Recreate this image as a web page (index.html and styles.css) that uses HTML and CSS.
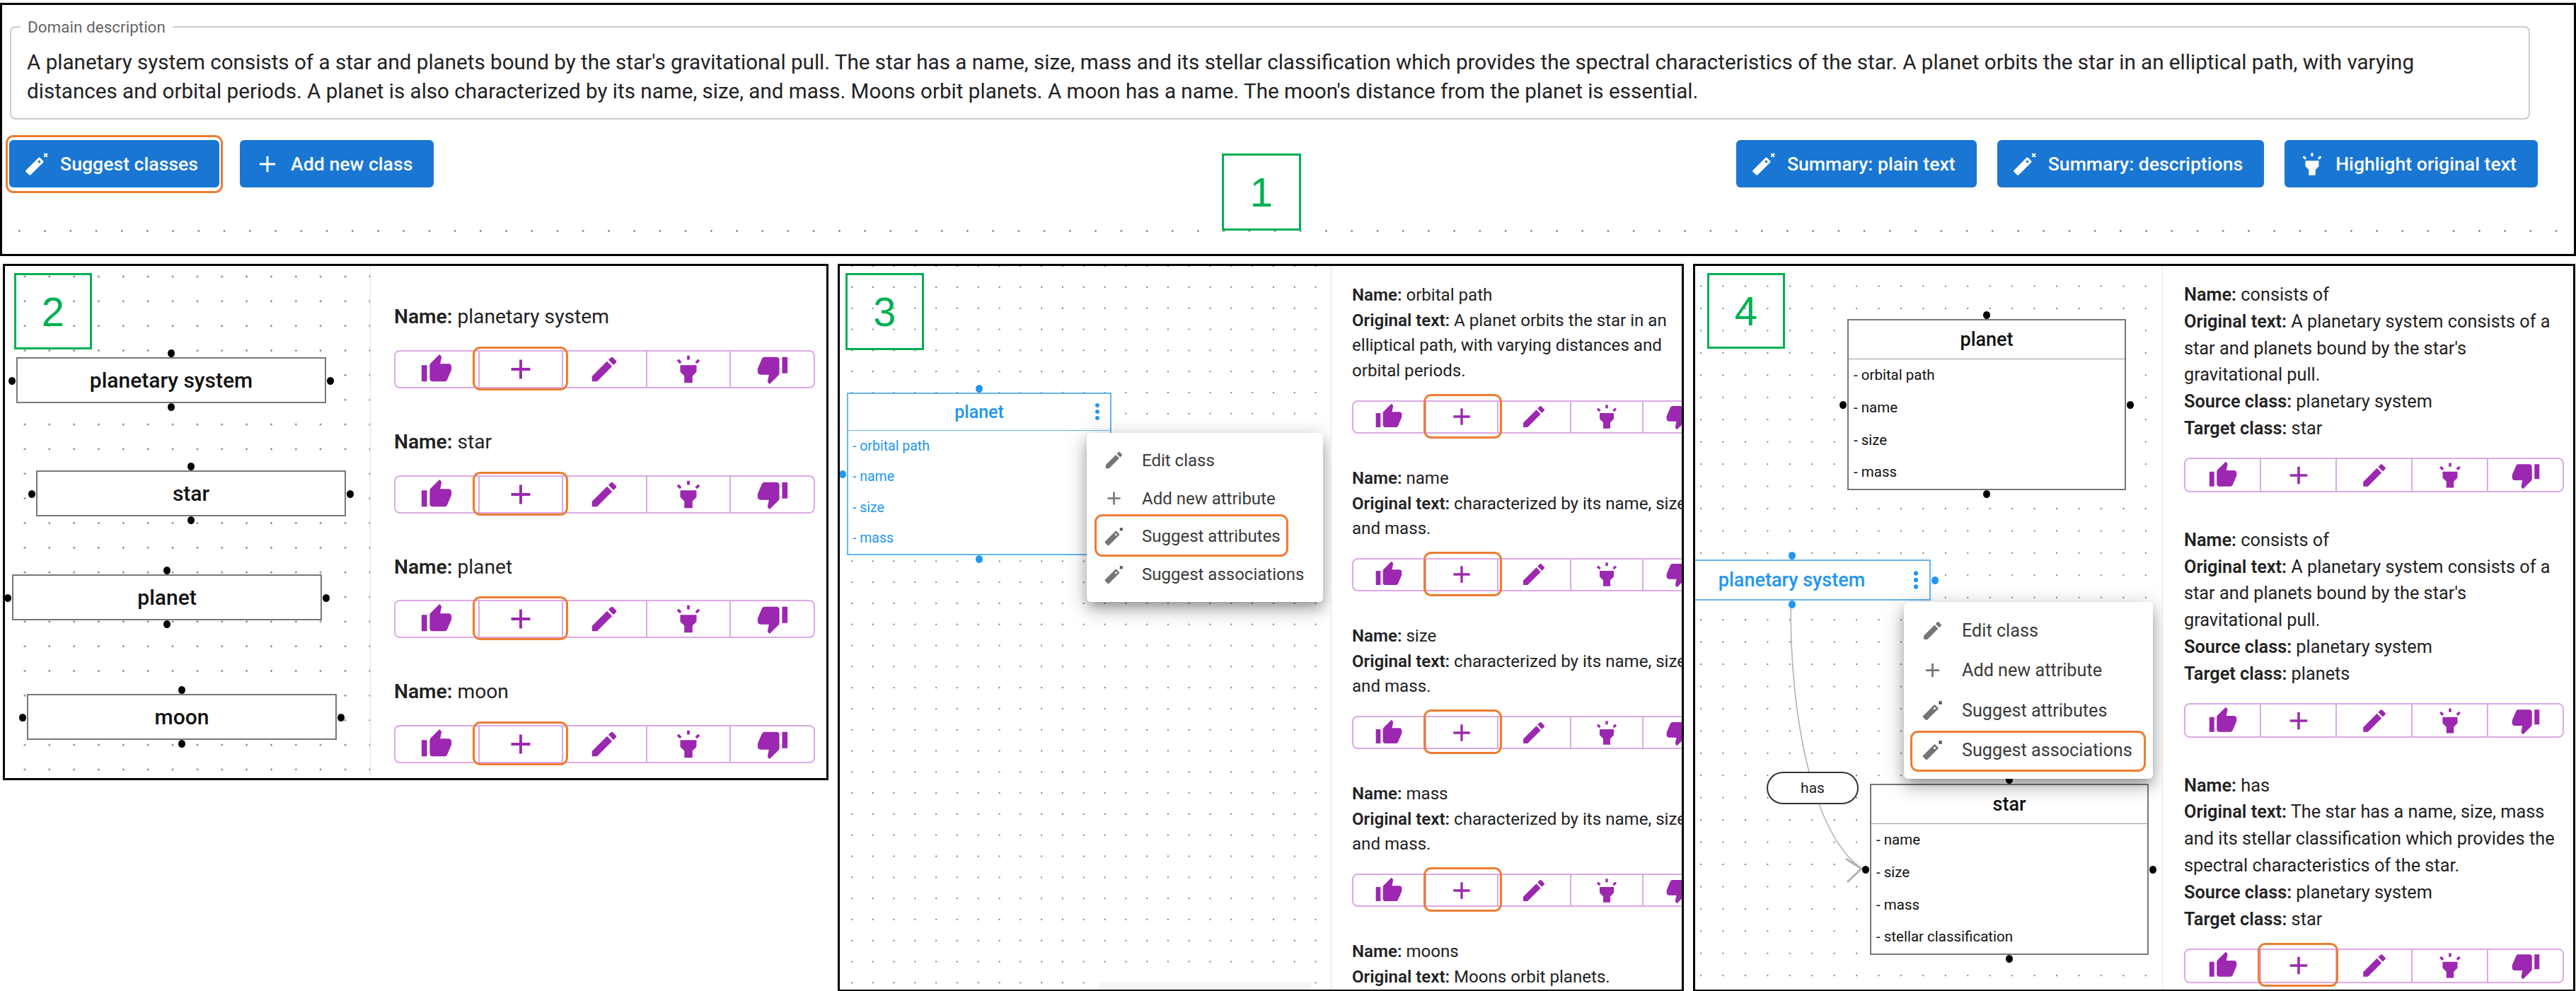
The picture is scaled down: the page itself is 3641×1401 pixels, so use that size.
FILE: index.html
```html
<!DOCTYPE html>
<html lang="en">
<head>
  <meta charset="utf-8">
  <title>Domain model assistant</title>
  <link rel="stylesheet" href="styles.css">
</head>
<body>
  <svg class="defs" xmlns="http://www.w3.org/2000/svg">
    <symbol id="i-wand" viewBox="0 0 24 24">
      <path fill-rule="evenodd" d="M17.71 9.12l-2.83-2.83C14.68 6.1 14.43 6 14.17 6c-.26 0-.51.1-.71.29L2.29 17.46c-.39.39-.39 1.02 0 1.41l2.83 2.83c.2.2.45.3.71.3s.51-.1.71-.29L17.71 10.54c.39-.39.39-1.03 0-1.42zm-3.54 2.12-1.41-1.41 1.41-1.41 1.41 1.41-1.41 1.41z"/>
      <path d="M18.5 2.5l3 3M21.5 2.5l-3 3" fill="none" stroke="currentColor" stroke-width="1.2"/>
    </symbol>
    <symbol id="i-add" viewBox="0 0 24 24"><path d="M19 13h-6v6h-2v-6H5v-2h6V5h2v6h6v2z"/></symbol>
    <symbol id="i-edit" viewBox="0 0 24 24"><path d="M3 17.25V21h3.75L17.81 9.94l-3.75-3.75L3 17.25zM20.71 7.04c.39-.39.39-1.02 0-1.41l-2.34-2.34c-.39-.39-1.02-.39-1.41 0l-1.83 1.83 3.75 3.75 1.83-1.83z"/></symbol>
    <symbol id="i-light" viewBox="0 0 24 24"><path d="M6 14l3 3v5h6v-5l3-3V9H6v5zm5-12h2v3h-2V2zM3.5 5.88l1.41-1.41 2.12 2.12L5.62 8 3.5 5.88zm13.46.71 2.12-2.12 1.41 1.41L18.38 8l-1.42-1.41z"/></symbol>
    <symbol id="i-up" viewBox="0 0 24 24"><path d="M1 21h4V9H1v12zm22-11c0-1.1-.9-2-2-2h-6.31l.95-4.57.03-.32c0-.41-.17-.79-.44-1.06L14.17 1 7.59 7.59C7.22 7.95 7 8.45 7 9v10c0 1.1.9 2 2 2h9c.83 0 1.54-.5 1.84-1.22l3.02-7.05c.09-.23.14-.47.14-.73v-2z"/></symbol>
    <symbol id="i-down" viewBox="0 0 24 24"><path d="M15 3H6c-.83 0-1.54.5-1.84 1.22l-3.02 7.05c-.09.23-.14.47-.14.73v2c0 1.1.9 2 2 2h6.31l-.95 4.57-.03.32c0 .41.17.79.44 1.06L9.83 23l6.59-6.59c.36-.36.58-.86.58-1.41V5c0-1.1-.9-2-2-2zm4 0v12h4V3h-4z"/></symbol>
    <symbol id="i-more" viewBox="0 0 24 24"><path d="M12 8c1.1 0 2-.9 2-2s-.9-2-2-2-2 .9-2 2 .9 2 2 2zm0 2c-1.1 0-2 .9-2 2s.9 2 2 2 2-.9 2-2-.9-2-2-2zm0 6c-1.1 0-2 .9-2 2s.9 2 2 2 2-.9 2-2-.9-2-2-2z"/></symbol>
  </svg>

  <div class="page">
    <!-- 1: description and main actions -->
    <section class="panel panel-top">
      <fieldset class="domain">
        <legend>Domain description</legend>
        <p>A planetary system consists of a star and planets bound by the star's gravitational pull. The star has a name, size, mass and its stellar classification which provides the spectral characteristics of the star. A planet orbits the star in an elliptical path, with varying<br>distances and orbital periods. A planet is also characterized by its name, size, and mass. Moons orbit planets. A moon has a name. The moon's distance from the planet is essential.</p>
      </fieldset>
      <div class="actions">
        <div class="action-group">
          <button class="btn"><svg><use href="#i-wand"/></svg>Suggest classes<span class="ring ring-btn"></span></button>
          <button class="btn"><svg><use href="#i-add"/></svg>Add new class</button>
        </div>
        <div class="action-group">
          <button class="btn"><svg><use href="#i-wand"/></svg>Summary: plain text</button>
          <button class="btn"><svg><use href="#i-wand"/></svg>Summary: descriptions</button>
          <button class="btn"><svg><use href="#i-light"/></svg>Highlight original text</button>
        </div>
      </div>
      <div class="dot-strip"></div>
      <div class="tag tag-1">1</div>
    </section>

    <div class="panel-row">
      <!-- 2: suggested classes -->
      <section class="panel panel-two">
        <div class="canvas">
          <div class="tag tag-2">2</div>
          <div class="node node-plain n2-system">planetary system<i class="h h-t"></i><i class="h h-b"></i><i class="h h-l"></i><i class="h h-r"></i></div>
          <div class="node node-plain n2-star">star<i class="h h-t"></i><i class="h h-b"></i><i class="h h-l"></i><i class="h h-r"></i></div>
          <div class="node node-plain n2-planet">planet<i class="h h-t"></i><i class="h h-b"></i><i class="h h-l"></i><i class="h h-r"></i></div>
          <div class="node node-plain n2-moon">moon<i class="h h-t"></i><i class="h h-b"></i><i class="h h-l"></i><i class="h h-r"></i></div>
        </div>
        <div class="list">
          <div class="item">
            <div class="desc"><b>Name:</b> planetary system</div>
            <div class="votes">
              <span class="vote"><svg><use href="#i-up"/></svg></span>
              <span class="vote"><svg><use href="#i-add"/></svg><span class="ring"></span></span>
              <span class="vote"><svg><use href="#i-edit"/></svg></span>
              <span class="vote"><svg><use href="#i-light"/></svg></span>
              <span class="vote"><svg><use href="#i-down"/></svg></span>
            </div>
          </div>
          <div class="item">
            <div class="desc"><b>Name:</b> star</div>
            <div class="votes">
              <span class="vote"><svg><use href="#i-up"/></svg></span>
              <span class="vote"><svg><use href="#i-add"/></svg><span class="ring"></span></span>
              <span class="vote"><svg><use href="#i-edit"/></svg></span>
              <span class="vote"><svg><use href="#i-light"/></svg></span>
              <span class="vote"><svg><use href="#i-down"/></svg></span>
            </div>
          </div>
          <div class="item">
            <div class="desc"><b>Name:</b> planet</div>
            <div class="votes">
              <span class="vote"><svg><use href="#i-up"/></svg></span>
              <span class="vote"><svg><use href="#i-add"/></svg><span class="ring"></span></span>
              <span class="vote"><svg><use href="#i-edit"/></svg></span>
              <span class="vote"><svg><use href="#i-light"/></svg></span>
              <span class="vote"><svg><use href="#i-down"/></svg></span>
            </div>
          </div>
          <div class="item">
            <div class="desc"><b>Name:</b> moon</div>
            <div class="votes">
              <span class="vote"><svg><use href="#i-up"/></svg></span>
              <span class="vote"><svg><use href="#i-add"/></svg><span class="ring"></span></span>
              <span class="vote"><svg><use href="#i-edit"/></svg></span>
              <span class="vote"><svg><use href="#i-light"/></svg></span>
              <span class="vote"><svg><use href="#i-down"/></svg></span>
            </div>
          </div>
        </div>
      </section>

      <!-- 3: suggested attributes -->
      <section class="panel panel-three">
        <div class="canvas">
          <div class="tag tag-3">3</div>
          <div class="node node-uml node-active n3-planet">
            <div class="node-head">planet<svg class="kebab"><use href="#i-more"/></svg></div>
            <ul class="attrs">
              <li>- orbital path</li>
              <li>- name</li>
              <li>- size</li>
              <li>- mass</li>
            </ul>
            <i class="h h-t"></i><i class="h h-b"></i><i class="h h-l"></i>
          </div>
          <div class="menu n3-menu">
            <div class="menu-item"><svg><use href="#i-edit"/></svg>Edit class</div>
            <div class="menu-item"><svg><use href="#i-add"/></svg>Add new attribute</div>
            <div class="menu-item"><svg><use href="#i-wand"/></svg>Suggest attributes</div>
            <div class="menu-item"><svg><use href="#i-wand"/></svg>Suggest associations</div>
            <span class="ring n3-ring"></span>
          </div>
          <div class="scroll-stub"></div>
        </div>
        <div class="list">
          <div class="item">
            <div class="desc"><b>Name:</b> orbital path<br><b>Original text:</b> A planet orbits the star in an<br>elliptical path, with varying distances and<br>orbital periods.</div>
            <div class="votes">
              <span class="vote"><svg><use href="#i-up"/></svg></span>
              <span class="vote"><svg><use href="#i-add"/></svg><span class="ring"></span></span>
              <span class="vote"><svg><use href="#i-edit"/></svg></span>
              <span class="vote"><svg><use href="#i-light"/></svg></span>
              <span class="vote"><svg><use href="#i-down"/></svg></span>
            </div>
          </div>
          <div class="item">
            <div class="desc"><b>Name:</b> name<br><b>Original text:</b> characterized by its name, size,<br>and mass.</div>
            <div class="votes">
              <span class="vote"><svg><use href="#i-up"/></svg></span>
              <span class="vote"><svg><use href="#i-add"/></svg><span class="ring"></span></span>
              <span class="vote"><svg><use href="#i-edit"/></svg></span>
              <span class="vote"><svg><use href="#i-light"/></svg></span>
              <span class="vote"><svg><use href="#i-down"/></svg></span>
            </div>
          </div>
          <div class="item">
            <div class="desc"><b>Name:</b> size<br><b>Original text:</b> characterized by its name, size,<br>and mass.</div>
            <div class="votes">
              <span class="vote"><svg><use href="#i-up"/></svg></span>
              <span class="vote"><svg><use href="#i-add"/></svg><span class="ring"></span></span>
              <span class="vote"><svg><use href="#i-edit"/></svg></span>
              <span class="vote"><svg><use href="#i-light"/></svg></span>
              <span class="vote"><svg><use href="#i-down"/></svg></span>
            </div>
          </div>
          <div class="item">
            <div class="desc"><b>Name:</b> mass<br><b>Original text:</b> characterized by its name, size,<br>and mass.</div>
            <div class="votes">
              <span class="vote"><svg><use href="#i-up"/></svg></span>
              <span class="vote"><svg><use href="#i-add"/></svg><span class="ring"></span></span>
              <span class="vote"><svg><use href="#i-edit"/></svg></span>
              <span class="vote"><svg><use href="#i-light"/></svg></span>
              <span class="vote"><svg><use href="#i-down"/></svg></span>
            </div>
          </div>
          <div class="item">
            <div class="desc"><b>Name:</b> moons<br><b>Original text:</b> Moons orbit planets.</div>
          </div>
        </div>
      </section>

      <!-- 4: suggested associations -->
      <section class="panel panel-four">
        <div class="canvas">
          <svg class="edges" xmlns="http://www.w3.org/2000/svg">
            <path d="M135 479C135 640 165 800 235 852"/>
            <path class="edge-arrow" d="M213 838L235 852L215 871"/>
          </svg>
          <div class="tag tag-4">4</div>
          <div class="node node-uml n4-planet">
            <div class="node-head">planet</div>
            <ul class="attrs">
              <li>- orbital path</li>
              <li>- name</li>
              <li>- size</li>
              <li>- mass</li>
            </ul>
            <i class="h h-t"></i><i class="h h-b"></i><i class="h h-l"></i><i class="h h-r"></i>
          </div>
          <div class="node node-uml n4-star">
            <div class="node-head">star</div>
            <ul class="attrs">
              <li>- name</li>
              <li>- size</li>
              <li>- mass</li>
              <li>- stellar classification</li>
            </ul>
            <i class="h h-t"></i><i class="h h-b"></i><i class="h h-l"></i><i class="h h-r"></i>
          </div>
          <div class="node node-active n4-system">
            <div class="node-head">planetary system<svg class="kebab"><use href="#i-more"/></svg></div>
            <i class="h h-t"></i><i class="h h-b"></i><i class="h h-r"></i>
          </div>
          <div class="edge-label">has</div>
          <div class="menu n4-menu">
            <div class="menu-item"><svg><use href="#i-edit"/></svg>Edit class</div>
            <div class="menu-item"><svg><use href="#i-add"/></svg>Add new attribute</div>
            <div class="menu-item"><svg><use href="#i-wand"/></svg>Suggest attributes</div>
            <div class="menu-item"><svg><use href="#i-wand"/></svg>Suggest associations</div>
            <span class="ring n4-ring"></span>
          </div>
        </div>
        <div class="list">
          <div class="item">
            <div class="desc"><b>Name:</b> consists of<br><b>Original text:</b> A planetary system consists of a<br>star and planets bound by the star's<br>gravitational pull.<br><b>Source class:</b> planetary system<br><b>Target class:</b> star</div>
            <div class="votes">
              <span class="vote"><svg><use href="#i-up"/></svg></span>
              <span class="vote"><svg><use href="#i-add"/></svg></span>
              <span class="vote"><svg><use href="#i-edit"/></svg></span>
              <span class="vote"><svg><use href="#i-light"/></svg></span>
              <span class="vote"><svg><use href="#i-down"/></svg></span>
            </div>
          </div>
          <div class="item">
            <div class="desc"><b>Name:</b> consists of<br><b>Original text:</b> A planetary system consists of a<br>star and planets bound by the star's<br>gravitational pull.<br><b>Source class:</b> planetary system<br><b>Target class:</b> planets</div>
            <div class="votes">
              <span class="vote"><svg><use href="#i-up"/></svg></span>
              <span class="vote"><svg><use href="#i-add"/></svg></span>
              <span class="vote"><svg><use href="#i-edit"/></svg></span>
              <span class="vote"><svg><use href="#i-light"/></svg></span>
              <span class="vote"><svg><use href="#i-down"/></svg></span>
            </div>
          </div>
          <div class="item">
            <div class="desc"><b>Name:</b> has<br><b>Original text:</b> The star has a name, size, mass<br>and its stellar classification which provides the<br>spectral characteristics of the star.<br><b>Source class:</b> planetary system<br><b>Target class:</b> star</div>
            <div class="votes">
              <span class="vote"><svg><use href="#i-up"/></svg></span>
              <span class="vote"><svg><use href="#i-add"/></svg><span class="ring"></span></span>
              <span class="vote"><svg><use href="#i-edit"/></svg></span>
              <span class="vote"><svg><use href="#i-light"/></svg></span>
              <span class="vote"><svg><use href="#i-down"/></svg></span>
            </div>
          </div>
        </div>
      </section>
    </div>
  </div>
</body>
</html>
```

FILE: styles.css
```css
* {
  box-sizing: border-box;
}

html, body {
  margin: 0;
  height: 100%;
  overflow: hidden;
  background-color: white;
}

body {
  font-family: Roboto, "Liberation Sans", sans-serif;
  color: #222;
}

.defs {
  display: none;
}

.page {
  padding-top: 4px;
}

.panel {
  position: relative;
  border: 3px solid black;
  background-color: white;
  overflow: hidden;
}

/* panel 1 */
.panel-top {
  height: 358px;
}

.domain {
  margin: 18px 62px 0 11px;
  padding: 17px 22px 0;
  height: 144px;
  border: 2px solid #ccc;
  border-radius: 8px;
}

.domain legend {
  margin-left: -9px;
  padding: 0 10px;
  font-size: 22.5px;
  line-height: 26px;
  color: #666;
}

.domain p {
  margin: 0;
  font-size: 29.6px;
  line-height: 41px;
  white-space: nowrap;
}

.actions {
  display: flex;
  justify-content: space-between;
  margin: 29px 51px 0 10px;
}

.action-group {
  display: flex;
  gap: 29px;
}

.btn {
  position: relative;
  display: flex;
  align-items: center;
  gap: 14px;
  height: 67px;
  padding: 0 30px 0 20px;
  border: none;
  border-radius: 6px;
  background-color: #1976d2;
  color: white;
  font-family: inherit;
  font-size: 26.65px;
  font-weight: 500;
  white-space: nowrap;
}

.btn svg {
  width: 38px;
  height: 38px;
  fill: currentColor;
}

.dot-strip {
  height: 3px;
  margin-top: 60px;
  background-image: radial-gradient(circle, #808080 1.1px, transparent 1.5px);
  background-size: 36.23px 3px;
  background-position: 6.3px 0;
}

.ring {
  position: absolute;
  border: 3px solid #ed7d31;
  border-radius: 11px;
  pointer-events: none;
}

.ring-btn {
  inset: -7px -5px -8px -5px;
}

.tag {
  position: absolute;
  display: flex;
  align-items: center;
  justify-content: center;
  border: 3px solid #00b050;
  color: #00b050;
  font-family: "Liberation Sans", sans-serif;
  font-size: 58px;
}

.tag-1 {
  left: 1724px;
  top: 210px;
  width: 112px;
  height: 109px;
}

.tag-2 {
  left: 13px;
  top: 10px;
  width: 110px;
  height: 108px;
}

.tag-3 {
  left: 8px;
  top: 10px;
  width: 111px;
  height: 109px;
}

.tag-4 {
  left: 17px;
  top: 10px;
  width: 110px;
  height: 107px;
}

/* panels 2, 3, 4 */
.panel-row {
  display: flex;
  align-items: flex-start;
  gap: 13px;
  margin: 11px 0 0 4px;
}

.panel-two {
  display: flex;
  width: 1167px;
  height: 730px;
}

.panel-three {
  display: flex;
  width: 1196px;
  height: 1029px;
}

.panel-four {
  display: flex;
  width: 1247px;
  height: 1029px;
}

.canvas {
  position: relative;
  flex: none;
  overflow: hidden;
  border-right: 1px solid #e4e4e4;
  background-image: radial-gradient(circle, #808080 1.1px, transparent 1.5px);
}

.panel-two .canvas {
  width: 517px;
  background-size: 34.85px 34.85px;
  background-position: 10.6px -2.4px;
}

.panel-three .canvas {
  width: 695px;
  background-size: 29.8px 29.8px;
  background-position: 2.1px 15.1px;
}

.panel-four .canvas {
  width: 661px;
  background-size: 31.45px 31.45px;
  background-position: -7.7px 12.9px;
}

/* nodes */
.node {
  position: absolute;
  border: 2px solid #777;
  background-color: white;
  color: #111;
}

.node-plain {
  display: flex;
  align-items: center;
  justify-content: center;
  width: 438px;
  height: 65px;
  font-size: 30px;
  font-weight: 500;
}

.n2-system { left: 16px; top: 129px; }
.n2-star { left: 44px; top: 289px; }
.n2-planet { left: 10px; top: 436px; }
.n2-moon { left: 31px; top: 605px; }

.h {
  position: absolute;
  width: 10px;
  height: 11px;
  border-radius: 50%;
  background-color: black;
}

.h-t { left: 50%; top: -13px; margin-left: -5px; }
.h-b { left: 50%; bottom: -13px; margin-left: -5px; }
.h-l { left: -13px; top: 50%; margin-top: -5px; }
.h-r { right: -13px; top: 50%; margin-top: -5px; }

.node-uml {
  display: flex;
  flex-direction: column;
}

.node-head {
  position: relative;
  display: flex;
  align-items: center;
  justify-content: center;
  border-bottom: 1px solid #999;
  font-weight: 500;
}

.attrs {
  margin: 0;
  padding: 0;
  list-style: none;
}

.node-active {
  border-color: #64b5f6;
  color: #2196f3;
}

.node-active .h {
  background-color: #2196f3;
}

.node-active .node-head {
  border-bottom-color: #64b5f6;
}

.kebab {
  position: absolute;
  top: 50%;
  right: 0;
  fill: #2196f3;
}

.n3-planet {
  left: 10px;
  top: 179px;
  width: 374px;
  height: 230px;
}

.n3-planet .node-head {
  height: 54px;
  font-size: 25px;
}

.n3-planet .kebab {
  width: 36px;
  height: 36px;
  margin-top: -18px;
}

.n3-planet .attrs {
  padding-left: 6px;
  font-size: 19.5px;
  line-height: 43.6px;
}

.n4-planet,
.n4-star {
  width: 394px;
  height: 242px;
}

.n4-planet { left: 215px; top: 75px; }
.n4-star { left: 247px; top: 732px; }

.n4-planet .node-head,
.n4-star .node-head {
  height: 57px;
  font-size: 27px;
}

.n4-planet .attrs,
.n4-star .attrs {
  padding-left: 7px;
  font-size: 20.5px;
  line-height: 45.7px;
}

.n4-system {
  left: -60px;
  top: 415px;
  width: 393px;
  height: 58px;
}

.n4-system .node-head {
  height: 100%;
  border-bottom: none;
  font-size: 27px;
}

.n4-system .kebab {
  width: 38px;
  height: 38px;
  margin-top: -19px;
}

.edges {
  position: absolute;
  left: 0;
  top: 0;
  width: 100%;
  height: 100%;
  fill: none;
  stroke: #b1b1b7;
  stroke-width: 1.6;
}

.edge-arrow {
  stroke-width: 3;
}

.edge-label {
  position: absolute;
  left: 101px;
  top: 715px;
  display: flex;
  align-items: center;
  justify-content: center;
  width: 130px;
  height: 46px;
  border: 2px solid #333;
  border-radius: 23px;
  background-color: white;
  font-size: 21px;
}

/* context menu */
.menu {
  position: absolute;
  padding: 12px 0;
  border-radius: 6px;
  background-color: white;
  box-shadow: 0 8px 16px -4px rgba(0, 0, 0, 0.3), 0 12px 26px 2px rgba(0, 0, 0, 0.14), 0 5px 30px 4px rgba(0, 0, 0, 0.12);
  color: #3a3a3a;
}

.menu-item {
  display: flex;
  align-items: center;
  white-space: nowrap;
}

.menu-item svg {
  flex: none;
  fill: #757575;
}

.n3-menu {
  left: 349px;
  top: 236px;
  width: 334px;
  height: 239px;
  font-size: 24px;
}

.n3-menu .menu-item {
  height: 53.75px;
  padding-left: 23px;
  gap: 24px;
}

.n3-menu .menu-item svg {
  width: 31px;
  height: 31px;
}

.n3-ring {
  left: 11px;
  top: 115px;
  width: 274px;
  height: 60px;
}

.n4-menu {
  left: 295px;
  top: 475px;
  width: 352px;
  height: 250px;
  font-size: 25.2px;
}

.n4-menu .menu-item {
  height: 56.5px;
  padding-left: 24px;
  gap: 25px;
}

.n4-menu .menu-item svg {
  width: 33px;
  height: 33px;
}

.n4-ring {
  left: 9px;
  top: 182px;
  width: 333px;
  height: 58px;
}

.scroll-stub {
  position: absolute;
  left: 366px;
  bottom: 0;
  width: 300px;
  height: 11px;
  background-color: #f6f6f6;
}

/* suggestion list */
.list {
  flex: 1;
  min-width: 0;
  overflow: hidden;
  white-space: nowrap;
}

.desc b {
  font-weight: 600;
}

.votes {
  display: flex;
  border: 2px solid #dba9e6;
  border-radius: 8px;
  color: #9c27b0;
}

.vote {
  position: relative;
  flex: 1;
  display: flex;
  align-items: center;
  justify-content: center;
  border-right: 2px solid #dba9e6;
}

.vote:last-child {
  border-right: none;
}

.vote svg {
  fill: currentColor;
}

.panel-two .list {
  padding: 51px 0 0 33px;
  font-size: 28.2px;
  line-height: 41.8px;
}

.panel-two .item {
  margin-bottom: 55px;
}

.panel-two .votes {
  width: 595px;
  height: 54px;
  margin-top: 26px;
}

.panel-two .vote svg {
  width: 46px;
  height: 46px;
}

.panel-two .ring {
  inset: -7px -9px -5px -10px;
}

.panel-three .list {
  padding: 24px 0 0 29px;
  font-size: 24.1px;
  line-height: 35.7px;
}

.panel-three .item {
  margin-bottom: 46px;
}

.panel-three .votes {
  width: 515px;
  height: 47px;
  margin-top: 23px;
}

.panel-three .vote svg {
  width: 40px;
  height: 40px;
}

.panel-three .vote .ring {
  inset: -11px -7px -9px -4px;
}

.panel-four .list {
  padding: 22px 0 0 30px;
  font-size: 25.3px;
  line-height: 37.8px;
}

.panel-four .item {
  margin-bottom: 48.5px;
}

.panel-four .votes {
  width: 537px;
  height: 49px;
  margin-top: 22.5px;
}

.panel-four .vote svg {
  width: 42px;
  height: 42px;
}

.panel-four .vote .ring {
  inset: -10px -4px -7px -5px;
}
```
